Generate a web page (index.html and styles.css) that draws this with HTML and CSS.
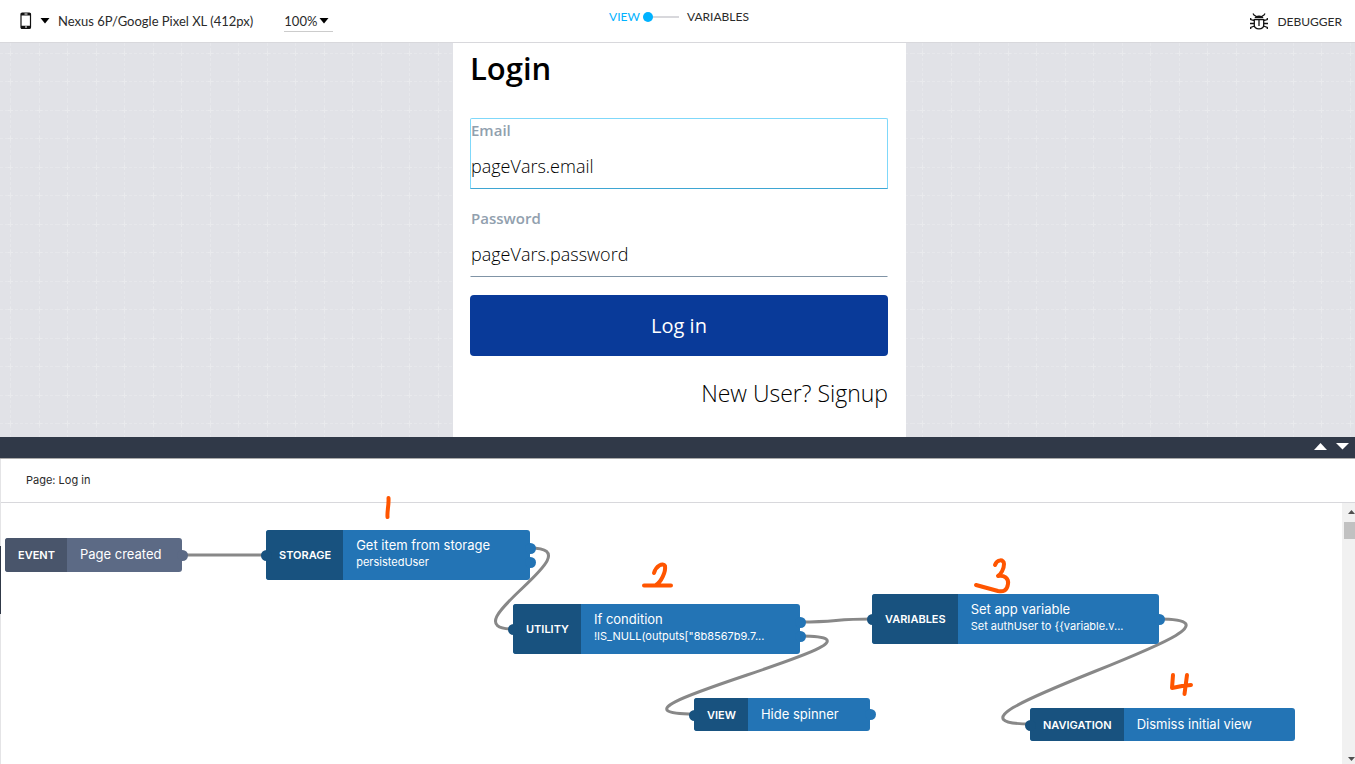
FILE: index.html
```html
<!DOCTYPE html>
<html lang="en">
<head>
<meta charset="utf-8">
<title>Log in – page logic</title>
<link rel="stylesheet" href="styles.css">
</head>
<body class="app">
<header class="topbar">
  <div class="topbar-left">
    <button class="device" type="button">
      <svg class="phone-icon" viewBox="0 0 12 18" width="12" height="18" aria-hidden="true"><rect x="1" y="1" width="9.500" height="15.500" rx="1.200" fill="none" stroke="#111" stroke-width="1.200"/><path d="M1 1h9.500v2.500H1zM1 13.700h9.500v2.800H1z" fill="#111"/><path d="M4.500 2h3M5 15h2" stroke="#fff"/></svg>
      <svg class="caret" viewBox="0 0 10 6" width="10" height="6" aria-hidden="true"><path d="M.5 0h9L5 5.500z" fill="#000"/></svg>
      <span>Nexus 6P/Google Pixel XL (412px)</span>
    </button>
    <div class="zoom">
      <select class="zoom-select" aria-label="Zoom"><option>100%</option></select>
      <svg class="caret" viewBox="0 0 10 6" width="10" height="6" aria-hidden="true"><path d="M.5 0h9L5 5.500z" fill="#000"/></svg>
    </div>
  </div>
  <nav class="modes" aria-label="Mode">
    <button class="mode mode-on" type="button">VIEW</button>
    <span class="mode-track"><span class="mode-dot"></span></span>
    <button class="mode" type="button">VARIABLES</button>
  </nav>
  <button class="debugger" type="button">
    <svg viewBox="0 0 18 17" width="18" height="17" aria-hidden="true"><path d="M4.500 5.300C4.800 3 6.500 2.400 9 2.400s4.200.6 4.500 2.900z" fill="#111"/><path d="M3 .5l1 1.500 2 1.200M15 .5l-1 1.500-2 1.200M4.300 6.700h9.400v5.300c0 2.500-2 3.800-4.700 3.800S4.300 14.500 4.300 12zM9 6.500V13M.7 5v1.500l3.600 1.200M17.300 5v1.500l-3.600 1.200M0 10.500h4.300M18 10.500h-4.300M.7 16v-1.500l3.800-1.500M17.300 16v-1.500L13.500 13" fill="none" stroke="#111" stroke-width="1.300"/></svg>
    <span>DEBUGGER</span>
  </button>
</header>

<main class="stage">
  <svg class="stage-grid" aria-hidden="true">
    <defs><pattern id="grid" width="57" height="57" patternUnits="userSpaceOnUse">
      <path d="M0 10.500h57M0 38.500h57M10.500 0v57M39.500 0v57" stroke="#e6e7eb" stroke-dasharray="3 2"/>
      <path d="M8 10.500h5M37 10.500h5M8 38.500h5M37 38.500h5M10.500 8v5M10.500 36v5M39.500 8v5M39.500 36v5" stroke="#e9eaed"/>
    </pattern></defs>
    <rect width="100%" height="100%" fill="url(#grid)"/>
  </svg>
  <form class="screen">
    <h1 class="title">Login</h1>
    <div class="field field-selected">
      <label class="field-label" for="email">Email</label>
      <input class="field-input" id="email" type="text" value="pageVars.email">
    </div>
    <div class="field">
      <label class="field-label" for="password">Password</label>
      <input class="field-input" id="password" type="text" value="pageVars.password">
    </div>
    <button class="login" type="button">Log in</button>
    <a class="signup" href="#">New User? Signup</a>
  </form>
</main>

<div class="divider">
  <button class="fold" type="button" aria-label="Expand panel"><svg viewBox="0 0 13 7" width="13" height="7"><path d="M0 7h13L6.500 0z" fill="#fff"/></svg></button>
  <button class="fold" type="button" aria-label="Collapse panel"><svg viewBox="0 0 13 7" width="13" height="7"><path d="M0 0h13L6.500 6.500z" fill="#fff"/></svg></button>
</div>

<section class="logic">
  <h2 class="logic-title">Page: Log in</h2>
  <div class="logic-body">
    <div class="canvas">
      <svg class="wires" width="1340" height="260" aria-hidden="true">
        <g fill="none" stroke="#888" stroke-width="3">
          <path d="M182 52H266"/>
          <path d="M530 45C600 45 444 126 514 126"/>
          <path d="M800 119C840 119 832 116 872 116"/>
          <path d="M800 133C926 133 568 211 694 211"/>
          <path d="M1158 116C1292 116 897 221 1031 221"/>
        </g>
      </svg>
      <article class="node node-event n-event"><span class="tag">EVENT</span><span class="info"><span class="name">Page created</span></span><span class="outs"><i class="port"></i></span></article>
      <article class="node n-storage"><i class="port in"></i><span class="tag">STORAGE</span><span class="info"><span class="name">Get item from storage</span><span class="detail">persistedUser</span></span><span class="outs"><i class="port"></i><i class="port"></i></span></article>
      <article class="node n-utility"><i class="port in"></i><span class="tag">UTILITY</span><span class="info"><span class="name">If condition</span><span class="detail">!IS_NULL(outputs["8b8567b9.7...</span></span><span class="outs"><i class="port"></i><i class="port"></i></span></article>
      <article class="node n-variables"><i class="port in"></i><span class="tag">VARIABLES</span><span class="info"><span class="name">Set app variable</span><span class="detail">Set authUser to {{variable.v...</span></span><span class="outs"><i class="port"></i></span></article>
      <article class="node n-view"><i class="port in"></i><span class="tag">VIEW</span><span class="info"><span class="name">Hide spinner</span></span><span class="outs"><i class="port"></i></span></article>
      <article class="node n-navigation"><i class="port in"></i><span class="tag">NAVIGATION</span><span class="info"><span class="name">Dismiss initial view</span></span></article>
      <svg class="ink" width="1340" height="260" aria-hidden="true">
        <g fill="none" stroke="#ff5500" stroke-width="4" stroke-linecap="round" stroke-linejoin="round">
          <path d="M388.500-5C389 2 387 8 387.500 14"/>
          <path d="M654 70C656 63 663 59 665 63C666 69 661 79 656 82M644 82.500H671"/>
          <path d="M995 62C997 56 1004 56 1004 61C1004 66 1001 71 998 73C1004 72 1009 75 1008 81C1007 88 1003 89 998 88L976 82"/>
          <path d="M1173 172L1172 185L1182 183L1191 182M1187 172L1184.500 191"/>
        </g>
      </svg>
      <span class="edge"></span>
    </div>
    <div class="scrollbar" aria-hidden="true">
      <svg viewBox="0 0 7 4" width="7" height="4"><path d="M0 4h7L3.500 0z" fill="#505050"/></svg>
      <span class="thumb"></span>
      <svg class="down" viewBox="0 0 7 4" width="7" height="4"><path d="M0 0h7L3.500 4z" fill="#505050"/></svg>
    </div>
  </div>
</section>
</body>
</html>
```
FILE: styles.css
```css
* { box-sizing: border-box; }

.app {
  margin: 0;
  min-height: 100vh;
  display: flex;
  flex-direction: column;
  overflow: hidden;
  background: #fff;
  color: #2a2a2a;
  font-family: Lato, "Open Sans", sans-serif;
  font-size: 13px;
}

button, select, input {
  margin: 0;
  padding: 0;
  border: 0;
  background: none;
  color: inherit;
  font: inherit;
}

/* Top bar */
.topbar {
  display: grid;
  grid-template-columns: 1fr auto 1fr;
  border-bottom: 1px solid #d8d8dc;
}
.topbar-left { display: flex; align-items: center; gap: 31px; padding: 10px 0 10px 20px; }
.device { display: flex; align-items: center; }
.device .caret { margin: 0 8px; }
.zoom { position: relative; display: flex; align-items: center; border-bottom: 1px solid #ccc; }
.zoom-select { appearance: none; width: 49px; height: 21px; padding-top: 1px; }
.zoom .caret { position: absolute; right: 4px; pointer-events: none; }
.modes { display: flex; align-items: flex-start; padding: 9px 0 0 3px; font-size: 12px; line-height: 16px; }
.mode-on { color: #00b2ff; }
.mode-track { width: 36px; height: 2px; margin: 7px 8px 0 3px; background: #d8d8dc; }
.mode-dot { display: block; width: 10px; height: 10px; margin-top: -4px; border-radius: 50%; background: #00b2ff; }
.debugger { display: flex; align-items: center; justify-self: end; gap: 9px; padding-right: 13px; font-size: 12px; }

/* Device preview */
.stage { position: relative; display: flex; justify-content: center; padding-left: 4px; background: #e1e2e7; }
.stage-grid { position: absolute; inset: 0; width: 100%; height: 100%; }
.screen {
  position: relative;
  display: flex;
  flex-direction: column;
  width: 100%;
  max-width: 453px;
  padding: 4px 18px 28px 17px;
  background: #fff;
  font-family: "Open Sans", sans-serif;
}
.title { margin: 0 0 29px; font-size: 31px; line-height: 42px; font-weight: 600; color: #000; }
.field { display: flex; flex-direction: column; margin-bottom: 17px; border: 1px solid transparent; border-bottom-color: #8094a6; }
.field-selected { border-color: #7fd8fa; border-bottom-color: #3ea6d3; border-radius: 2px 2px 0 0; }
.field-label { color: #91a0ae; font-size: 15px; line-height: 22px; font-weight: 600; }
.field-input { width: 100%; height: 47px; padding-top: 3px; color: #000; font-size: 18px; font-weight: 300; }
.login { margin-top: 1px; height: 61px; border-radius: 4px; background: #093a99; color: #fff; font-size: 20px; }
.signup { align-self: flex-end; margin-top: 21px; color: #000; font-size: 23px; line-height: 32px; font-weight: 300; text-decoration: none; }

/* Panel divider */
.divider { display: flex; justify-content: flex-end; gap: 9px; padding: 6px 6px 8px; background: #303948; border-bottom: 1px solid #aaa; }
.fold { display: flex; }

/* Logic editor */
.logic { display: flex; flex: 1; flex-direction: column; border-left: 1px solid #e4e4e6; }
.logic-title { margin: 0; padding: 13px 25px 14px; border-bottom: 1px solid #d8d8dc; font: 11px/16px Inter, sans-serif; }
.logic-body { display: flex; flex: 1; }
.canvas { position: relative; flex: 1; min-height: 261px; margin-left: -1px; font-family: Inter, sans-serif; }
.wires, .ink { position: absolute; left: 0; top: 0; overflow: visible; pointer-events: none; }
.edge { position: absolute; left: 0; top: 43px; width: 1px; height: 68px; background: #303948; }

.node { position: absolute; display: flex; height: 50px; border-radius: 3px; background: #2374b5; color: #fff; }
.tag { display: flex; align-items: center; padding: 0 12px 0 13px; border-radius: 3px 0 0 3px; background: #18527f; font-size: 11px; font-weight: 600; }
.info { display: flex; flex: 1; flex-direction: column; justify-content: center; padding: 0 13px 2px; white-space: nowrap; }
.name { font-size: 13px; line-height: 18px; }
.detail { margin-bottom: 2px; font-size: 11px; line-height: 16px; }
.port { width: 11px; height: 11px; border-radius: 50%; background: #2374b5; }
.in { position: absolute; left: -5px; top: 50%; margin-top: -5px; background: #18527f; }
.outs { position: absolute; right: -6px; top: 0; bottom: 0; display: flex; flex-direction: column; justify-content: center; gap: 3px; }
.node-event { background: #5c6a85; }
.node-event .tag { background: #49556b; }
.node-event .port { background: #5c6a85; }

.n-event { left: 5px; top: 35px; width: 177px; height: 34px; }
.n-storage { left: 266px; top: 27px; width: 264px; }
.n-utility { left: 513px; top: 101px; width: 287px; }
.n-variables { left: 872px; top: 91px; width: 287px; }
.n-view { left: 694px; top: 195px; width: 176px; height: 33px; }
.n-navigation { left: 1030px; top: 205px; width: 265px; height: 33px; }

.scrollbar { display: flex; flex-direction: column; align-items: center; width: 17px; margin-right: -4px; padding: 7px 1px 3px 2px; background: #f1f1f1; }
.thumb { width: 100%; height: 17px; margin-top: 8px; background: #c1c1c1; }
.down { margin-top: auto; }
```
